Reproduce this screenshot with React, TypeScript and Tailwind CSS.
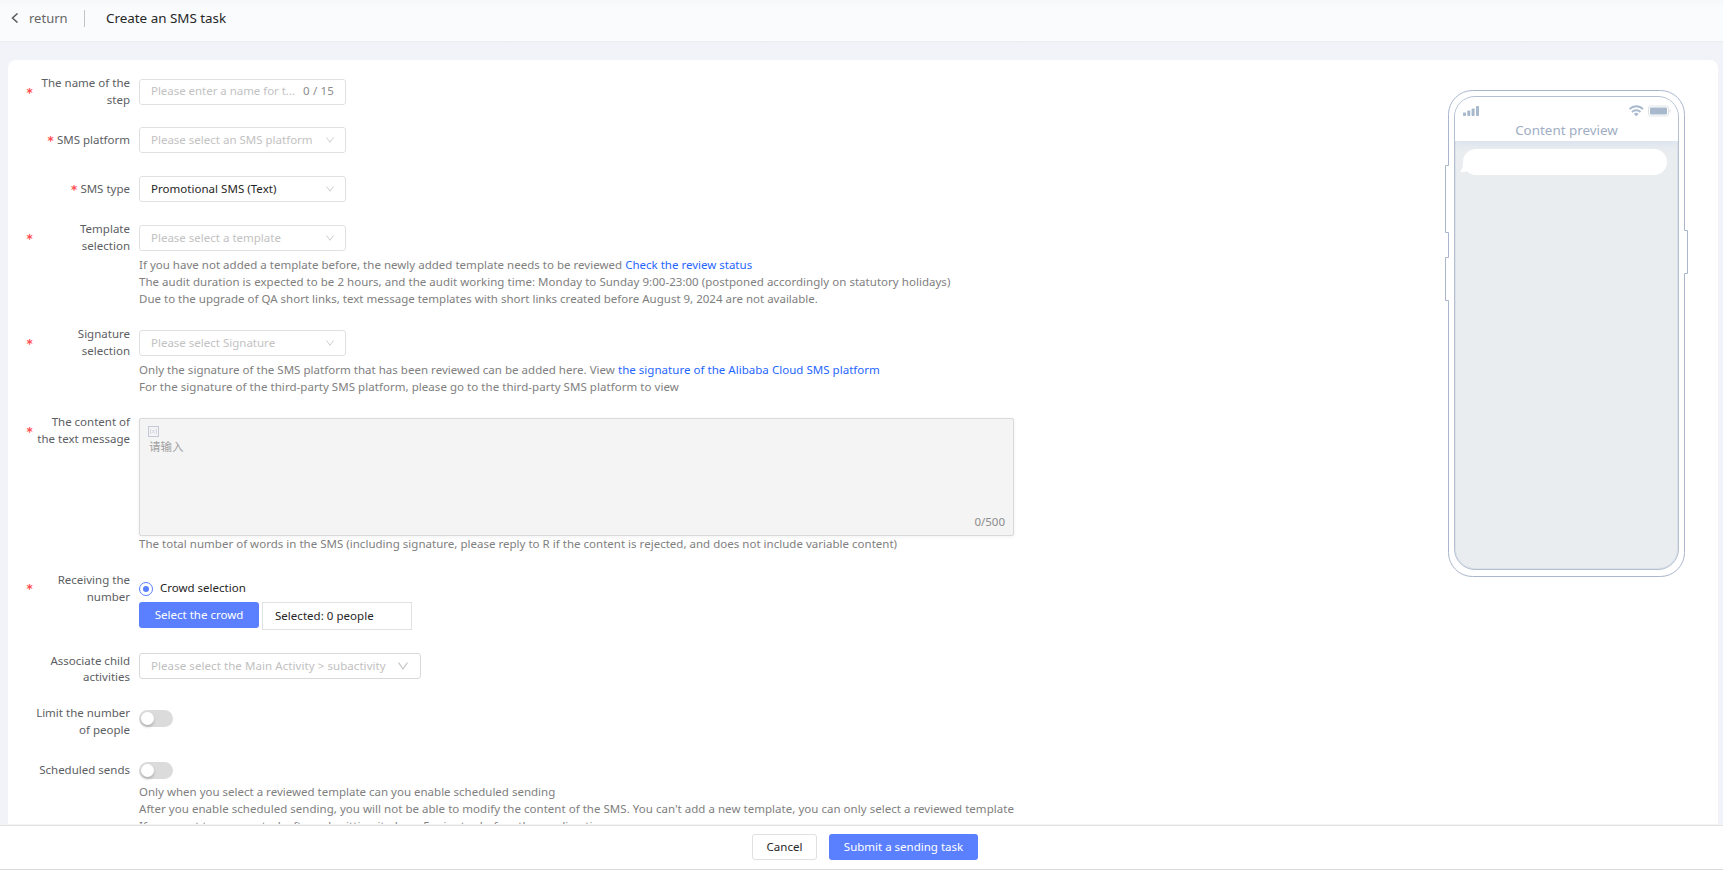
import type { ReactNode } from "react";

function Chevron({ wide = false }: { wide?: boolean }) {
  return (
    <svg
      width={wide ? 10 : 8}
      height={wide ? 8 : 6}
      viewBox="0 0 10 8"
      preserveAspectRatio="none"
      className="shrink-0"
      fill="none"
      stroke="#c4c4c4"
      strokeWidth="1.1"
    >
      <path d="M0.6 0.6 5 7 9.4 0.6" />
    </svg>
  );
}

type LabelProps = { lines: string[]; required?: boolean; shift?: "up" | "down" | "none"; tight?: boolean };

function Label({ lines, required = false, shift = "up", tight = false }: LabelProps) {
  const wrapped = lines.length > 1;
  const padding = shift === "up" ? "pb-[2px]" : shift === "down" ? "pt-[5px]" : "";
  return (
    <div
      className={`flex h-[26px] w-[104px] shrink-0 items-center ${wrapped ? "justify-between" : "justify-end gap-[3px]"} ${
        tight ? "leading-4" : "leading-[17px]"
      } text-[#5c5e63]`}
    >
      {required ? (
        <span className="w-[7px] pt-[3px] font-['DejaVu_Sans_Mono',monospace] text-[12px] leading-[17px] font-bold text-[#ff4d50]">*</span>
      ) : (
        <span />
      )}
      <div className={`text-right whitespace-nowrap ${padding}`}>
        {lines.map((line) => (
          <div key={line}>{line}</div>
        ))}
      </div>
    </div>
  );
}

function Row({ className = "", label, children }: { className?: string; label: ReactNode; children: ReactNode }) {
  return (
    <div className={`flex items-start gap-[9px] ${className}`}>
      {label}
      <div>{children}</div>
    </div>
  );
}

function Select({ text, filled = false }: { text: string; filled?: boolean }) {
  return (
    <div
      className={`flex h-[26px] w-[207px] items-center justify-between rounded-[3px] border border-[#e0e0e0] bg-white pr-[11px] pl-[11px] whitespace-nowrap ${
        filled ? "tracking-[0.03px] text-[#262626]" : "text-[#c2c2c2]"
      }`}
    >
      <span className="pb-[2px]">{text}</span>
      <Chevron />
    </div>
  );
}

function Switch() {
  return (
    <div className="flex h-[17px] w-[34px] items-center rounded-full bg-[#dbdbdb] pl-[2px]">
      <div className="h-[13px] w-[13px] rounded-full bg-white shadow-[0_2px_3px_rgba(0,0,0,0.2)]" />
    </div>
  );
}

function Phone() {
  return (
    <div className="relative h-[488px] w-[244px] shrink-0 pt-[6px] pl-[9px]">
      <svg className="absolute top-0 left-0" width="244" height="488" viewBox="0 0 244 488" fill="none" stroke="#a9b6cb">
        <path d="M3.5 75.5V24.5a24 24 0 0 1 24-24H215.5a24 24 0 0 1 24 24V140.500h3V183.500h-3V462.500a24 24 0 0 1-24 24H27.500a24 24 0 0 1-24-24V210.500h-3V167.500h3V142.500h-3V75.500Z" />
      </svg>
      <div className="relative flex h-[474px] w-[225px] flex-col overflow-hidden rounded-[21px] border border-[#b4c0d0] bg-[#e9edf0] ring-1 ring-[#dbe1e9] ring-inset">
        <div className="flex h-[44px] flex-col bg-white shadow-[0_1px_10px_#d3dcec]">
          <div className="flex items-end justify-between pt-[8px] pr-[7px] pl-[8px]">
            <svg width="17" height="12" viewBox="0 0 17 12" fill="#a9b9cd">
              <rect x="0" y="7.500" width="3" height="3.500" rx="0.800" />
              <rect x="4.300" y="5.500" width="3" height="5.500" rx="0.800" />
              <rect x="8.600" y="3.500" width="3" height="7.500" rx="0.800" />
              <rect x="13" y="1" width="3" height="10" rx="0.800" />
            </svg>
            <svg width="42" height="12" viewBox="0 0 42 12" fill="none">
              <path d="M0.5 4.100a9.400 9.400 0 0 1 13.500 0M3 7a6 6 0 0 1 8.500 0" stroke="#a9b9cd" strokeWidth="1.900" />
              <path d="M4.900 8.900a3.300 3.300 0 0 1 4.700 0L7.250 11.300Z" fill="#a9b9cd" />
              <rect x="19.500" y="1" width="20" height="10" rx="2" stroke="#dfe3e8" />
              <rect x="21" y="2.500" width="17" height="7" rx="1" fill="#a9b9cd" />
              <path d="M41 4.500v3" stroke="#dfe3e8" strokeWidth="1.200" />
            </svg>
          </div>
          <div className="pt-[2px] text-center text-[13.4px] leading-[22px] text-[#a0aec3]">Content preview</div>
        </div>
        <div className="relative mt-[8px] ml-[8px] h-[26px] w-[204px] rounded-full bg-white">
          <svg className="absolute top-[14px] -left-[3px]" width="14" height="10" viewBox="0 0 14 10" fill="white">
            <path d="M3.200 0Q3 5 0 9.200q5 0 8-1.200L14 3Z" />
          </svg>
        </div>
      </div>
    </div>
  );
}

export default function App() {
  return (
    <div className="flex h-[870px] w-[1723px] flex-col overflow-hidden bg-[#f2f3f8] font-['Noto_Sans','Noto_Sans_CJK_SC',sans-serif] text-[11.5px] leading-[17px] text-[#262626]">
      <header className="flex h-[41px] shrink-0 items-center bg-linear-to-b from-[#f7f8fa] via-[#fafbfd] via-20% to-[#fafbfd] pb-[5px] pl-[11px] shadow-[0_1px_2px_#e9ebf0]">
        <svg width="8" height="10" viewBox="0 0 8 10" fill="none" stroke="#595959" strokeWidth="1.500">
          <path d="M6.500 0.500 1.500 5l5 4.500" />
        </svg>
        <span className="ml-[10px] w-[55px] text-[13px] text-[#666]">return</span>
        <span className="h-[17px] w-px bg-[#c4c4c4]" />
        <span className="ml-[21px] text-[13.4px]">Create an SMS task</span>
      </header>

      <main className="mt-[19px] mr-[5px] ml-[8px] flex h-[764px] shrink-0 items-start justify-between overflow-hidden rounded-t-[8px] bg-white pr-[29px] pl-[18px]">
        <div className="flex flex-col pt-[19px] whitespace-nowrap">
          <Row className="h-[48px]" label={<Label required lines={["The name of the", "step"]} />}>
            <div className="flex h-[26px] w-[207px] items-center justify-between rounded-[3px] border border-[#e0e0e0] pr-[11px] pb-[3px] pl-[11px]">
              <span className="tracking-[-0.04px] text-[#c2c2c2]">Please enter a name for t...</span>
              <span className="tracking-[0.15px] text-[#8c8c8c]">0 / 15</span>
            </div>
          </Row>
          <Row className="h-[49px]" label={<Label required lines={["SMS platform"]} />}>
            <Select text="Please select an SMS platform" />
          </Row>
          <Row className="h-[49px]" label={<Label required lines={["SMS type"]} />}>
            <Select text="Promotional SMS (Text)" filled />
          </Row>
          <Row className="h-[105px]" label={<Label required lines={["Template", "selection"]} />}>
            <Select text="Please select a template" />
            <div className="pt-[5px] text-[#808080]">
              <p>
                <span className="tracking-[0.015px]">If you have not added a template before, the newly added template needs to be reviewed </span>
                <a className="text-[#1f66ff]">Check the review status</a>
              </p>
              <p className="tracking-[0.03px]">
                The audit duration is expected to be 2 hours, and the audit working time: Monday to Sunday 9:00-23:00 (postponed accordingly on
                statutory holidays)
              </p>
              <p>
                Due to the upgrade of QA short links, text message templates with short links created before August 9, 2024 are not available.
              </p>
            </div>
          </Row>
          <Row className="h-[88px]" label={<Label required lines={["Signature", "selection"]} />}>
            <Select text="Please select Signature" />
            <div className="pt-[5px] text-[#808080]">
              <p>
                <span className="tracking-[0.025px]">Only the signature of the SMS platform that has been reviewed can be added here. View </span>
                <a className="tracking-[0.03px] text-[#1f66ff]">the signature of the Alibaba Cloud SMS platform</a>
              </p>
              <p className="tracking-[0.045px]">
                For the signature of the third-party SMS platform, please go to the third-party SMS platform to view
              </p>
            </div>
          </Row>
          <Row className="h-[157px]" label={<Label required lines={["The content of", "the text message"]} />}>
            <div className="flex h-[118px] w-[875px] flex-col rounded-[2px] border border-[#d9d9d9] bg-[#f4f4f4] pt-[7px] pr-[8px] pl-[8px] shadow-[0_1px_4px_rgba(0,0,0,0.06)]">
              <svg width="11" height="11" viewBox="0 0 11 11" fill="none" stroke="#c5c8d8">
                <rect x="0.500" y="0.500" width="10" height="10" />
                <path d="M3.200 3.500h-0.700v4h0.700M7.800 3.500h0.700v4h-0.700M4.300 4l2.400 3M6.700 4 4.300 7" strokeWidth="0.700" />
              </svg>
              <span className="mt-px pl-px leading-[18px] text-[#a0a0a0]">请输入</span>
              <span className="mt-auto mb-[5px] self-end text-[#8c8c8c]">0/500</span>
            </div>
            <p className="-mt-px tracking-[0.015px] text-[#808080]">
              The total number of words in the SMS (including signature, please reply to R if the content is rejected, and does not include
              variable content)
            </p>
          </Row>
          <Row className="h-[78px]" label={<Label required shift="none" lines={["Receiving the", "number"]} />}>
            <div className="flex h-[27px] items-center gap-[7px]">
              <span className="flex h-[14px] w-[14px] items-center justify-center rounded-full border border-[#5a7fff]">
                <span className="h-[6px] w-[6px] rounded-full bg-[#5a7fff]" />
              </span>
              <span className="pb-[2px]">Crowd selection</span>
            </div>
            <div className="flex items-start gap-[3px]">
              <button className="h-[26px] w-[120px] rounded-[3px] bg-[#5a80ff] pb-[2px] text-white">Select the crowd</button>
              <div className="flex h-[28px] w-[150px] items-center border border-[#e2e2e2] pb-[2px] pl-[12px] tracking-[0.03px]">
                Selected: 0 people
              </div>
            </div>
          </Row>
          <Row className="h-[55px]" label={<Label tight shift="down" lines={["Associate child", "activities"]} />}>
            <div className="flex h-[26px] w-[282px] items-center justify-between rounded-[3px] border border-[#d9d9d9] pr-[12px] pl-[11px] text-[#bfbfbf]">
              <span className="pb-[2px] tracking-[0.07px]">Please select the Main Activity &gt; subactivity</span>
              <Chevron wide />
            </div>
          </Row>
          <Row className="h-[49px]" label={<Label shift="none" lines={["Limit the number", "of people"]} />}>
            <div className="pt-[2px]">
              <Switch />
            </div>
          </Row>
          <Row label={<Label lines={["Scheduled sends"]} />}>
            <div className="pt-[5px]">
              <Switch />
            </div>
            <div className="pt-[4px] text-[#808080]">
              <p>Only when you select a reviewed template can you enable scheduled sending</p>
              <p className="tracking-[0.03px]">
                After you enable scheduled sending, you will not be able to modify the content of the SMS. You can't add a new template, you can
                only select a reviewed template
              </p>
              <p>If you want to pause a task after submitting it, do so 5 minutes before the sending time</p>
            </div>
          </Row>
        </div>
        <div className="pt-[30px]">
          <Phone />
        </div>
      </main>

      <footer className="mt-px flex h-[45px] shrink-0 items-start justify-center gap-[12px] border-t border-b border-t-[#e3e4e6] border-b-[#d9d9d9] bg-white pt-[8px] pl-[7px] shadow-[0_-1px_0_#f3f3f3]">
        <button className="h-[26px] w-[65px] rounded-[3px] border border-[#e0e0e0] pb-[2px]">Cancel</button>
        <button className="h-[26px] w-[149px] rounded-[3px] bg-[#5a80ff] pb-[2px] text-white">Submit a sending task</button>
      </footer>
    </div>
  );
}
